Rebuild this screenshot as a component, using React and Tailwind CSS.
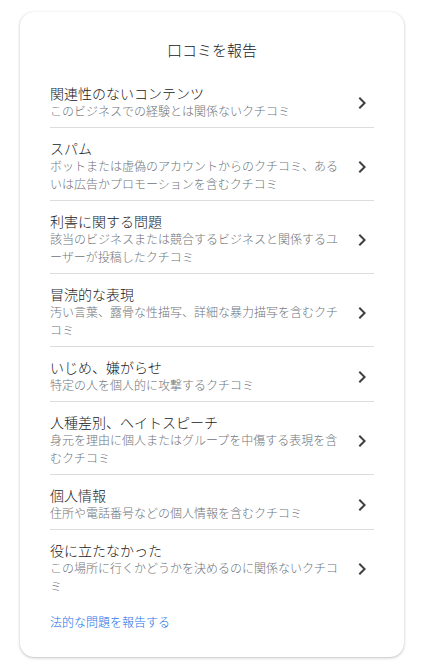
import React from "react";

const rows = [
  ["関連性のないコンテンツ", "このビジネスでの経験とは関係ないクチコミ"],
  ["スパム", "ボットまたは虚偽のアカウントからのクチコミ、あるいは広告かプロモーションを含むクチコミ"],
  ["利害に関する問題", "該当のビジネスまたは競合するビジネスと関係するユーザーが投稿したクチコミ"],
  ["冒涜的な表現", "汚い言葉、露骨な性描写、詳細な暴力描写を含むクチコミ"],
  ["いじめ、嫌がらせ", "特定の人を個人的に攻撃するクチコミ"],
  ["人種差別、ヘイトスピーチ", "身元を理由に個人またはグループを中傷する表現を含むクチコミ"],
  ["個人情報", "住所や電話番号などの個人情報を含むクチコミ"],
  ["役に立たなかった", "この場所に行くかどうかを決めるのに関係ないクチコミ"],
];

function Chevron() {
  return (
    <svg width="24" height="24" viewBox="0 0 24 24" className="shrink-0" fill="#3c4043">
      <path d="M10 6L8.59 7.41 13.17 12l-4.58 4.59L10 18l6-6z" />
    </svg>
  );
}

export default function App() {
  return (
    <div
      className="min-h-screen bg-white pl-5 pt-3 pb-3"
      style={{ fontFamily: '"Noto Sans CJK JP", "Noto Sans", sans-serif' }}
    >
      <div className="w-[384px] rounded-[14px] bg-white px-[30px] pt-[27px] pb-[26px] font-light shadow-[0_1px_3px_rgba(60,64,67,0.3),0_0_1px_rgba(60,64,67,0.15)]">
        <h1 className="mb-[12px] text-center text-[15px] leading-[22px] text-[#202124]">口コミを報告</h1>
        <div className="flex flex-col">
          {rows.map(([t, s], i) => (
            <div
              key={t}
              className={`flex items-center gap-2 pt-[12px] pb-[7px] ${i < rows.length - 1 ? "border-b border-[#dadce0]" : ""}`}
            >
              <div className="flex-1">
                <div className="text-[14px] leading-[17px] text-[#202124]">{t}</div>
                <div className="text-[12px] leading-[18px] text-[#70757a]">{s}</div>
              </div>
              <Chevron />
            </div>
          ))}
        </div>
        <div className="mt-[11px] text-[12px] leading-[18px] text-[#1a73e8]">法的な問題を報告する</div>
      </div>
    </div>
  );
}
